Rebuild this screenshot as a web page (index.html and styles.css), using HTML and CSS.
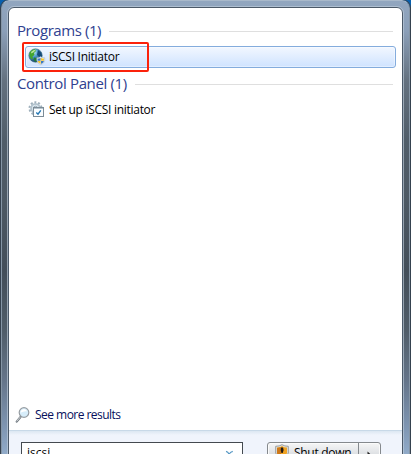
FILE: index.html
```
<!DOCTYPE html>
<html lang="en">
<head>
<meta charset="utf-8">
<title>Start menu</title>
<link rel="stylesheet" href="styles.css">
</head>
<body>
<div class="frame">
  <div class="menu">
    <main class="results">
      <h2 class="group"><span class="programs">Programs (1)</span></h2>
      <div class="row selected">
        <svg class="icon" width="18" height="18" viewBox="0 0 18 18">
          <defs><radialGradient id="globe" cx=".35" cy=".25" r=".8"><stop offset="0" stop-color="#d5effa"/><stop offset=".4" stop-color="#4e9fce"/><stop offset="1" stop-color="#0b3766"/></radialGradient></defs>
          <circle cx="7.5" cy="7.5" r="6.7" fill="url(#globe)" stroke="#436e82" stroke-width=".6"/>
          <path d="M1.2 6C2 3 4.5 1.1 7 1.2L8 3 6 5 6.5 7 4.5 8.5 5 10.5 3.8 11.5Q1 9 1.2 6Z" fill="#43a52f"/>
          <path d="M10 2L13 4.5 14 8 11.5 9 9 7 9.5 4.5Z" fill="#164b78"/>
          <path d="M6 9.5L9 10 9.5 12.5 7.5 14 5.5 12Z" fill="#237c37"/>
          <path d="M3 4Q5 1.8 8 1.8L6 4 3.5 5.5Z" fill="#b8e69a"/>
          <path d="M12.5 8.6Q14 10 16.7 9.8V12.6Q16.3 15.4 12.8 16.8 9.3 15.2 8.8 12.6V9.8Q11.5 9.8 12.5 8.6Z" fill="#f4f7fa" stroke="#9aa9b4" stroke-width=".5"/>
          <path d="M12.6 9.7V12.8H9.5V10.6Q11.5 10.6 12.6 9.7ZM12.9 13V16Q15.5 15 16 13Z" fill="#3979c3"/>
          <path d="M12.9 9.7Q14 10.6 16 10.6V12.7H12.9ZM9.6 13H12.6V16Q10.2 15 9.6 13Z" fill="#f4c42e"/>
        </svg>
        <span class="name initiator">iSCSI Initiator</span>
      </div>
      <h2 class="group second"><span class="control">Control Panel (1)</span></h2>
      <div class="row plain">
        <svg class="icon" width="18" height="18" viewBox="0 0 18 18">
          <circle cx="7.5" cy="7.3" r="6" fill="none" stroke="#9fb0bc" stroke-width="2" stroke-dasharray="2 1.77"/>
          <circle cx="7.5" cy="7.3" r="4.4" fill="#dce8ef" stroke="#b0c0cb" stroke-width="1.8"/>
          <circle cx="7.5" cy="7.3" r="2" fill="#fff" stroke="#8299a9" stroke-width=".8"/>
          <rect x="5.5" y="6.5" width="10" height="9" fill="#fafdff" stroke="#7d8c97"/>
          <path d="M6 7.5H15" stroke="#b5c4ce"/>
          <path d="M8.3 11.4L10 13.2 12.8 9.4" fill="none" stroke="#2477b3" stroke-width="1.4"/>
        </svg>
        <span class="name setup">Set up iSCSI initiator</span>
      </div>
      <a class="more">
        <svg width="16" height="18" viewBox="0 0 16 18">
          <path d="M1.7 15.6L5.5 11" stroke="#747c83" stroke-width="2.2" stroke-linecap="round"/>
          <path d="M1.7 15.3L5.5 10.8" stroke="#d1d5d8" stroke-width="1"/>
          <circle cx="9" cy="6.5" r="4.8" fill="#d7edfa" stroke="#979da2" stroke-width="1.2"/>
          <path d="M5.5 6.7Q6 3.5 9 3.1 11 3.4 12.2 5.3 9 4.6 5.5 6.7Z" fill="#fff"/>
        </svg>
        <span class="see">See more results</span>
      </a>
    </main>
    <footer class="footer">
      <div class="search"><span class="query">iscsi</span>
        <svg width="9" height="9" viewBox="0 0 9 9"><path d="M1 1.3Q3 1.6 4.2 4.3L7.8 8M7.8 1.3Q5 2 4.2 4.3L1 8" fill="none" stroke="#5b9bc6" stroke-width="1.2"/></svg>
      </div>
      <div class="power">
        <div class="shutdown">
          <svg width="14" height="16" viewBox="0 0 14 16">
            <path d="M7 .7Q9.5 2.3 13.3 2.3V9Q12.5 13 7 15.3 1.5 13 .7 9V2.3Q4.5 2.3 7 .7Z" fill="#e3e3df" stroke="#85898d" stroke-width=".8"/>
            <path d="M7 2Q9 3.5 12 3.6V9Q11 12 7 14 3 12 2 9V3.6Q5 3.5 7 2Z" fill="#f0a323"/>
            <path d="M2 4L6 3V14Q3 12 2 9Z" fill="#ce7818"/>
            <path d="M6 3.5H8L8.6 6 7.7 9H6.4L5.7 6Z" fill="#211b14"/>
          </svg>
          <span class="down">Shut down</span>
        </div>
        <div class="arrow"><svg width="6" height="10" viewBox="0 0 6 10"><path d="M.5 .5L5.5 5 .5 9.5Z" fill="#222"/></svg></div>
      </div>
    </footer>
  </div>
</div>
<div class="marker"></div>
</body>
</html>
```
FILE: styles.css
```
* { box-sizing: border-box; }
body {
  margin: 0;
  width: 411px;
  height: 454px;
  overflow: hidden;
  background: #075fae;
  font-family: "Open Sans", "Noto Sans", sans-serif;
  font-size: 12px;
  color: #000;
}
.frame {
  height: 464px;
  padding: 6px 7px 0 6px;
  border: 1px solid #a9b9ca;
  border-color: #a9b9ca #8595a5;
  border-radius: 8px 8px 0 0;
  outline: 1px solid #35424f;
  width: 409px;
  margin-left: 1px;
  background: linear-gradient(#91a6bf 0, #8b9fb8 30px, #64717f 80px, #505d69 140px, #4d5964 200px, #434e59 270px, #505d69 330px, #65758a 380px, #7e95b1 425px, #91abc9 454px);
}
.menu {
  width: 395px;
  height: 460px;
  border: 1px solid #4b5968;
  border-radius: 6px 6px 0 0;
  background: #fff;
  outline: 1px solid rgba(190, 205, 218, .65);
  overflow: hidden;
}
.results {
  height: 422px;
  padding: 13px 6px 0 8px;
  display: flex;
  flex-direction: column;
}
.group {
  margin: 0 3px 0 0;
  height: 20px;
  display: flex;
  align-items: center;
  gap: 7px;
  font-size: 15px;
  font-weight: 400;
  color: #2f4190;
  white-space: nowrap;
}
.group::after { content: ""; flex: 1; height: 1px; background: #dfdfdf; }
.group span { line-height: 18px; padding-bottom: 3px; }
.second { margin-top: 6px; }
.programs { width: 85px; letter-spacing: -.42px; }
.control { width: 111px; letter-spacing: -.36px; }
.row {
  display: flex;
  align-items: center;
  height: 22px;
  margin-left: 8px;
  padding-left: 3px;
  gap: 3px;
}
.selected {
  margin-top: 5px;
  border: 1px solid #84acdd;
  border-radius: 3px;
  background: linear-gradient(#f2f7ff, #cfe3ff);
  box-shadow: inset 0 0 0 1px rgba(255,255,255,.4);
  padding-left: 2px;
}
.plain { margin-top: 5px; }
.name, .see, .query, .down { white-space: nowrap; line-height: 18px; }
.icon { flex: none; }
.initiator { letter-spacing: -.27px; }
.setup { letter-spacing: -.29px; }
.more {
  margin: auto 0 6px -2px;
  display: flex;
  align-items: center;
  gap: 4px;
  color: #06105d;
}
.see { letter-spacing: -.53px; }
.footer {
  height: 40px;
  border-top: 1px solid #c8d9e8;
  background: linear-gradient(#dce7f2, #f0f4fc 4px);
  padding: 11px 0 0 12px;
  display: flex;
  align-items: flex-start;
}
.search {
  width: 222px;
  height: 24px;
  border: 1px solid #444a50;
  background: #fff;
  display: flex;
  justify-content: space-between;
  padding: 0 8px 0 5px;
}
.search svg { margin-top: 7px; }
.query { line-height: 20px; }
.power {
  margin-left: 24px;
  width: 114px;
  height: 24px;
  display: flex;
  border: 1px solid #85898d;
  border-radius: 3px;
  background: linear-gradient(#f6f6f6, #dcdfe3 12px);
  box-shadow: inset 0 0 0 1px #fbfbfb;
}
.shutdown { width: 91px; display: flex; gap: 5px; padding: 1px 0 0 7px; border-right: 1px solid #85898d; }
.down { font-size: 12px; letter-spacing: -.3px; }
.arrow { padding: 5px 0 0 8px; }
.marker {
  position: absolute;
  left: 22px;
  top: 42px;
  width: 127px;
  height: 30px;
  border: 2px solid #fb220b;
  border-radius: 2px;
}
```
